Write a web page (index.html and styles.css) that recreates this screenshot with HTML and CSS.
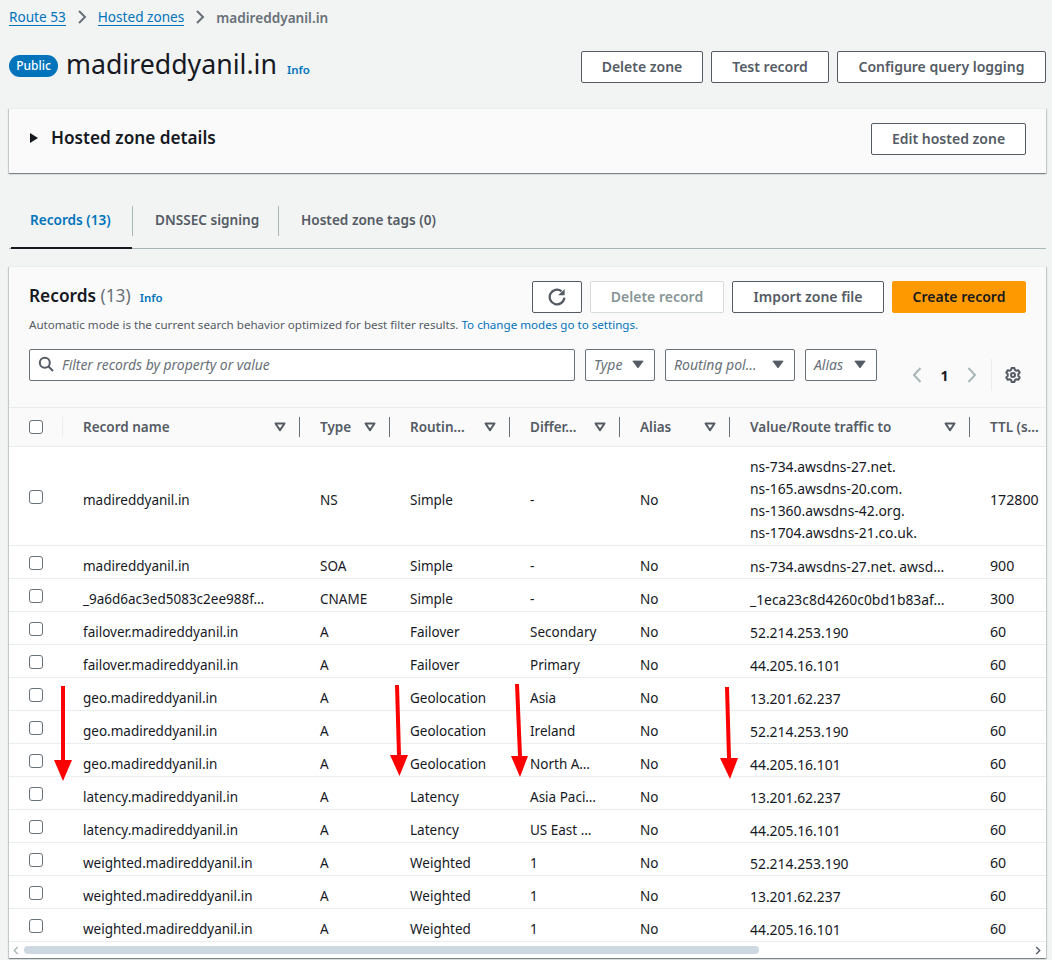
FILE: index.html
```html
<!DOCTYPE html>
<html lang="en">
<head>
  <meta charset="UTF-8">
  <title>madireddyanil.in - Route 53</title>
  <link rel="stylesheet" href="styles.css">
</head>
<body>
  <svg class="sprite" width="0" height="0">
    <symbol id="caret" viewBox="0 0 12 10">
      <path d="M1.5 1.5h9L6 8.2z" fill="none" stroke="#545b64" stroke-width="2" stroke-linejoin="round"/>
    </symbol>
    <symbol id="drop" viewBox="0 0 14 10">
      <path d="M1 1h12L7 9z" fill="#545b64" stroke="#545b64" stroke-linejoin="round"/>
    </symbol>
  </svg>

  <nav class="breadcrumb">
    <a href="#">Route 53</a>
    <svg class="crumb-sep" viewBox="0 0 10 14"><path d="M2 1l6 6-6 6" fill="none" stroke="#687078" stroke-width="2"/></svg>
    <a href="#">Hosted zones</a>
    <svg class="crumb-sep" viewBox="0 0 10 14"><path d="M2 1l6 6-6 6" fill="none" stroke="#687078" stroke-width="2"/></svg>
    <span class="crumb-current">madireddyanil.in</span>
  </nav>

  <header class="page-head">
    <span class="badge">Public</span>
    <h1>madireddyanil.in</h1>
    <a class="info info-head" href="#">Info</a>
    <div class="actions">
      <button class="btn btn-delete-zone">Delete zone</button>
      <button class="btn btn-test">Test record</button>
      <button class="btn btn-logging">Configure query logging</button>
    </div>
  </header>

  <section class="panel details">
    <svg class="expand" viewBox="0 0 8 10"><path d="M0 0l8 5-8 5z" fill="#16191f"/></svg>
    <h2>Hosted zone details</h2>
    <button class="btn btn-edit">Edit hosted zone</button>
  </section>

  <div class="tabs">
    <a class="tab tab-active" href="#">Records (13)</a>
    <a class="tab tab-dnssec" href="#">DNSSEC signing</a>
    <a class="tab tab-tags" href="#">Hosted zone tags (0)</a>
  </div>

  <section class="panel records">
    <div class="records-head">
      <div class="records-title">
        <h2>Records <span class="count">(13)</span></h2>
        <a class="info" href="#">Info</a>
      </div>
      <button class="btn btn-refresh" aria-label="Refresh">
        <svg viewBox="0 0 16 16" width="18" height="18"><path d="M14.500 8.500a6.500 6.500 0 1 1-2.500-5.600" fill="none" stroke="#545b64" stroke-width="2"/><path d="M14.800 0.800v5.700H9z" fill="#545b64"/></svg>
      </button>
      <button class="btn btn-disabled">Delete record</button>
      <button class="btn btn-import">Import zone file</button>
      <button class="btn btn-primary">Create record</button>
    </div>
    <p class="hint">Automatic mode is the current search behavior optimized for best filter results. <a href="#">To change modes go to settings.</a></p>

    <div class="filters">
      <div class="search">
        <svg viewBox="0 0 16 16" width="16" height="16"><circle cx="6.800" cy="6.800" r="5" fill="none" stroke="#545b64" stroke-width="2"/><path d="M10.500 10.500l4.500 4.500" stroke="#545b64" stroke-width="2"/></svg>
        <span>Filter records by property or value</span>
      </div>
      <div class="select select-type"><span>Type</span><svg class="drop"><use href="#drop"/></svg></div>
      <div class="select select-routing"><span>Routing pol…</span><svg class="drop"><use href="#drop"/></svg></div>
      <div class="select select-alias"><span>Alias</span><svg class="drop"><use href="#drop"/></svg></div>
      <div class="pager">
        <svg class="page-arrow" viewBox="0 0 10 16"><path d="M8.500 1L2 8l6.500 7" fill="none" stroke="#aab7b8" stroke-width="2"/></svg>
        <span class="page-num">1</span>
        <svg class="page-arrow" viewBox="0 0 10 16"><path d="M1.500 1L8 8l-6.500 7" fill="none" stroke="#aab7b8" stroke-width="2"/></svg>
        <span class="pager-rule"></span>
        <svg class="gear" viewBox="0 0 16 16" width="16" height="16">
          <path d="M6.600 1h2.800l.5 1.900 1.500.9 1.900-.6 1.400 2.400-1.400 1.400v2l1.400 1.400-1.400 2.400-1.900-.6-1.500.9-.5 1.900H6.600l-.5-1.900-1.500-.9-1.900.6-1.400-2.400L2.700 9V7L1.300 5.600l1.400-2.400 1.900.6 1.500-.9z" fill="none" stroke="#545b64" stroke-width="2" stroke-linejoin="round"/>
          <circle cx="8" cy="8" r="2" fill="none" stroke="#545b64" stroke-width="2"/>
        </svg>
      </div>
    </div>

    <div class="table-wrap">
      <table>
        <colgroup>
          <col class="col-check"><col class="col-name"><col class="col-type"><col class="col-routing"><col class="col-diff"><col class="col-alias"><col class="col-value"><col class="col-ttl">
        </colgroup>
        <thead>
          <tr>
            <th class="check-head"><span class="checkbox"></span></th>
            <th><div class="th-in"><span>Record name</span><svg class="caret"><use href="#caret"/></svg></div></th>
            <th><div class="th-in"><span>Type</span><svg class="caret"><use href="#caret"/></svg></div></th>
            <th><div class="th-in"><span>Routin…</span><svg class="caret"><use href="#caret"/></svg></div></th>
            <th><div class="th-in"><span>Differ…</span><svg class="caret"><use href="#caret"/></svg></div></th>
            <th><div class="th-in"><span>Alias</span><svg class="caret"><use href="#caret"/></svg></div></th>
            <th><div class="th-in"><span>Value/Route traffic to</span><svg class="caret"><use href="#caret"/></svg></div></th>
            <th class="ttl-head">TTL (s…</th>
          </tr>
        </thead>
        <tbody>
          <tr class="row-tall">
            <td><span class="checkbox"></span></td><td>madireddyanil.in</td><td>NS</td><td>Simple</td><td>-</td><td>No</td>
            <td class="multi">ns-734.awsdns-27.net.<br>ns-165.awsdns-20.com.<br>ns-1360.awsdns-42.org.<br>ns-1704.awsdns-21.co.uk.</td><td>172800</td>
          </tr>
          <tr><td><span class="checkbox"></span></td><td>madireddyanil.in</td><td>SOA</td><td>Simple</td><td>-</td><td>No</td><td>ns-734.awsdns-27.net. awsd…</td><td>900</td></tr>
          <tr><td><span class="checkbox"></span></td><td>_9a6d6ac3ed5083c2ee988f…</td><td>CNAME</td><td>Simple</td><td>-</td><td>No</td><td>_1eca23c8d4260c0bd1b83af…</td><td>300</td></tr>
          <tr><td><span class="checkbox"></span></td><td>failover.madireddyanil.in</td><td>A</td><td>Failover</td><td>Secondary</td><td>No</td><td>52.214.253.190</td><td>60</td></tr>
          <tr><td><span class="checkbox"></span></td><td>failover.madireddyanil.in</td><td>A</td><td>Failover</td><td>Primary</td><td>No</td><td>44.205.16.101</td><td>60</td></tr>
          <tr><td><span class="checkbox"></span></td><td>geo.madireddyanil.in</td><td>A</td><td>Geolocation</td><td>Asia</td><td>No</td><td>13.201.62.237</td><td>60</td></tr>
          <tr><td><span class="checkbox"></span></td><td>geo.madireddyanil.in</td><td>A</td><td>Geolocation</td><td>Ireland</td><td>No</td><td>52.214.253.190</td><td>60</td></tr>
          <tr><td><span class="checkbox"></span></td><td>geo.madireddyanil.in</td><td>A</td><td>Geolocation</td><td>North A…</td><td>No</td><td>44.205.16.101</td><td>60</td></tr>
          <tr><td><span class="checkbox"></span></td><td>latency.madireddyanil.in</td><td>A</td><td>Latency</td><td>Asia Paci…</td><td>No</td><td>13.201.62.237</td><td>60</td></tr>
          <tr><td><span class="checkbox"></span></td><td>latency.madireddyanil.in</td><td>A</td><td>Latency</td><td>US East …</td><td>No</td><td>44.205.16.101</td><td>60</td></tr>
          <tr><td><span class="checkbox"></span></td><td>weighted.madireddyanil.in</td><td>A</td><td>Weighted</td><td>1</td><td>No</td><td>52.214.253.190</td><td>60</td></tr>
          <tr><td><span class="checkbox"></span></td><td>weighted.madireddyanil.in</td><td>A</td><td>Weighted</td><td>1</td><td>No</td><td>13.201.62.237</td><td>60</td></tr>
          <tr><td><span class="checkbox"></span></td><td>weighted.madireddyanil.in</td><td>A</td><td>Weighted</td><td>1</td><td>No</td><td>44.205.16.101</td><td>60</td></tr>
        </tbody>
      </table>
    </div>

    <div class="hscroll">
      <svg viewBox="0 0 6 10" width="6" height="9"><path d="M5 1L1 5l4 4" fill="none" stroke="#aab7b8" stroke-width="1.500"/></svg>
      <div class="hscroll-track"><div class="hscroll-thumb"></div></div>
      <svg viewBox="0 0 6 10" width="6" height="9"><path d="M1 1l4 4-4 4" fill="none" stroke="#545b64" stroke-width="1.500"/></svg>
    </div>
  </section>

  <!-- red arrows drawn over the screenshot -->
  <svg class="arrows" viewBox="0 0 1052 960" width="1052" height="960">
    <g fill="#ff0000">
      <polygon points="61,686 65,686 65,760 72,760 63,781 54,760 61,760"/>
      <polygon points="395,685 399,685 401,755 408,755 399.500,776 390,755 397,755"/>
      <polygon points="515,684 519,684 522,756 528,756 520,777 511,756 518,756"/>
      <polygon points="725,687 729,687 731,758 738,758 730,779 720,758 727,758"/>
    </g>
  </svg>
</body>
</html>
```

FILE: styles.css
```css
* {
  box-sizing: border-box;
}
html, body {
  height: 960px;
  overflow: hidden;
}
body {
  position: relative;
  margin: 0;
  padding: 7px 6px 0 9px;
  background-color: #f2f3f3;
  color: #16191f;
  font-family: "Noto Sans", sans-serif;
  font-size: 13.5px;
}
a {
  color: #0073bb;
  text-decoration: none;
}
h1, h2, p {
  margin: 0;
}
.sprite {
  position: absolute;
}
.arrows {
  position: absolute;
  left: 0;
  top: 0;
  pointer-events: none;
}

/* breadcrumb */
.breadcrumb {
  display: flex;
  align-items: center;
  height: 20px;
  font-size: 13.6px;
}
.breadcrumb a {
  border-bottom: 1px solid #0073bb;
  line-height: 17px;
}
.crumb-sep {
  width: 10px;
  height: 14px;
  margin: 0 11px;
}
.crumb-current {
  color: #687078;
  font-weight: 600;
}

/* page header */
.page-head {
  display: flex;
  align-items: center;
  height: 32px;
  margin-top: 24px;
}
.badge {
  width: 49px;
  height: 22px;
  margin-top: -2px;
  border-radius: 11px;
  background-color: #0073bb;
  color: #fff;
  font-size: 12px;
  font-weight: 500;
  line-height: 22px;
  text-align: center;
}
h1 {
  margin: -6px 0 0 8px;
  font-size: 26.7px;
  font-weight: 400;
  line-height: 34px;
}
.info {
  font-size: 11.5px;
  font-weight: 600;
}
.info-head {
  margin: 5px 0 0 10px;
}
.actions {
  display: flex;
  gap: 8px;
  margin-left: auto;
}

/* buttons */
.btn {
  height: 32px;
  padding: 0 0 2px;
  border: 1px solid #545b64;
  border-radius: 2px;
  background-color: #fff;
  color: #545b64;
  font-family: inherit;
  font-size: 14px;
  font-weight: 600;
}
.btn-delete-zone {
  width: 122px;
}
.btn-test {
  width: 118px;
}
.btn-logging {
  width: 209px;
}
.btn-edit {
  width: 155px;
  margin-left: auto;
}
.btn-refresh {
  display: flex;
  align-items: center;
  justify-content: center;
  width: 50px;
  margin-left: auto;
  padding: 0;
}
.btn-disabled {
  width: 134px;
  border-color: #d5dbdb;
  color: #879596;
}
.btn-import {
  width: 152px;
}
.btn-primary {
  width: 134px;
  border-color: #ff9900;
  background-color: #ff9900;
  color: #16191f;
}

/* panels */
.panel {
  background-color: #fafafa;
  box-shadow: 0 1px 1px 0 rgba(0, 28, 36, .3), 1px 1px 1px 0 rgba(0, 28, 36, .15), -1px 1px 1px 0 rgba(0, 28, 36, .15);
  border-top: 1px solid #eaeded;
}
.details {
  display: flex;
  align-items: center;
  height: 65px;
  margin-top: 25px;
  padding: 0 20px 4px 21px;
}
.expand {
  width: 8px;
  height: 10px;
  margin-bottom: 3px;
}
.details h2 {
  margin: 0 0 3px 13px;
  font-size: 17.2px;
  font-weight: 600;
}

/* tabs */
.tabs {
  display: flex;
  height: 44px;
  margin-top: 32px;
  border-bottom: 1px solid #aab7b8;
  padding-left: 2px;
  font-size: 13.6px;
}
.tab {
  height: 30px;
  margin-top: 1px;
  padding-left: 22px;
  border-right: 1px solid #aab7b8;
  color: #545b64;
  font-weight: 600;
  line-height: 28px;
}
.tab-active {
  position: relative;
  width: 122px;
  padding-left: 19px;
  color: #0073bb;
}
.tab-active::after {
  content: "";
  position: absolute;
  left: 0;
  right: 0;
  top: 41px;
  height: 2px;
  background-color: #16191f;
}
.tab-dnssec {
  width: 146px;
}
.tab-tags {
  border-right: 0;
}

/* records panel */
.records {
  position: relative;
  height: 692px;
  margin-top: 17px;
  overflow: hidden;
}
.records-head {
  display: flex;
  align-items: center;
  gap: 8px;
  margin: 14px 20px 0;
  height: 32px;
}
.records-title {
  display: flex;
  align-items: center;
}
.records-title h2 {
  margin-bottom: 3px;
  font-size: 17.3px;
  font-weight: 600;
}
.count {
  color: #687078;
  font-weight: 400;
}
.records-title .info {
  margin-left: 9px;
}
.hint {
  margin: 3px 20px 0;
  color: #545b64;
  font-size: 11.6px;
  line-height: 18px;
}
.filters {
  display: flex;
  align-items: flex-start;
  gap: 10px;
  margin: 15px 20px 0;
  height: 32px;
}
.search, .select {
  display: flex;
  flex: none;
  align-items: center;
  height: 32px;
  padding-bottom: 2px;
  border: 1px solid #687078;
  border-radius: 2px;
  background-color: #fff;
  color: #687078;
  font-size: 14px;
  font-style: italic;
}
.search {
  gap: 8px;
  width: 546px;
  padding-left: 8px;
  font-size: 13.9px;
}
.select {
  justify-content: space-between;
  padding-left: 8px;
  padding-right: 10px;
}
.select-type {
  width: 70px;
}
.select-routing {
  width: 130px;
}
.select-alias {
  width: 72px;
}
.drop {
  width: 12px;
  height: 9px;
}
.pager {
  display: flex;
  flex: none;
  align-items: center;
  height: 32px;
  margin-top: 10px;
  margin-left: 25px;
}
.page-arrow {
  width: 10px;
  height: 16px;
}
.page-num {
  width: 45px;
  font-size: 14px;
  font-weight: 700;
  text-align: center;
}
.pager-rule {
  width: 1px;
  height: 32px;
  margin: 0 13px 0 14px;
  background-color: #eaeded;
}

/* table */
.table-wrap {
  margin-top: 26px;
  overflow: hidden;
}
table {
  width: 1055px;
  table-layout: fixed;
  border-collapse: collapse;
}
.col-check { width: 54px; }
.col-name { width: 237px; }
.col-type { width: 90px; }
.col-routing { width: 120px; }
.col-diff { width: 110px; }
.col-alias { width: 110px; }
.col-value { width: 240px; }
.col-ttl { width: 94px; }
thead tr {
  height: 39px;
  border-top: 1px solid #eaeded;
  border-bottom: 1px solid #eaeded;
}
th {
  position: relative;
  padding: 0 0 0 20px;
  color: #545b64;
  font-weight: 600;
  text-align: left;
  white-space: nowrap;
  overflow: hidden;
}
.th-in {
  display: flex;
  align-items: center;
  justify-content: space-between;
  height: 20px;
  padding-right: 13px;
  border-right: 1px solid #687078;
}
.th-in .caret {
  width: 12px;
  height: 10px;
}
.check-head::after {
  content: "";
  position: absolute;
  right: 0;
  top: 9px;
  height: 20px;
  width: 1px;
  background-color: #eaeded;
}
tbody tr {
  height: 33px;
  background-color: #fff;
  border-bottom: 1px solid #eaeded;
}
.row-tall {
  height: 99px;
}
td {
  padding: 8px 20px 0;
  white-space: nowrap;
}
td:nth-child(7) {
  font-size: 13.9px;
}
td:last-child {
  padding: 7px 0 0 20px;
  font-size: 14.2px;
}
.multi {
  line-height: 22px;
}
.checkbox {
  display: block;
  width: 14px;
  height: 14px;
  margin-bottom: 6px;
  border: 1px solid #687078;
  border-radius: 3px;
  background-color: #fff;
}
thead .checkbox {
  margin-bottom: 0;
}

/* fake horizontal scrollbar */
.hscroll {
  display: flex;
  align-items: center;
  gap: 5px;
  height: 16px;
  padding: 0 5px 0 4px;
  background-color: #fff;
}
.hscroll-track {
  flex: 1;
  height: 8px;
}
.hscroll-thumb {
  width: 735px;
  height: 8px;
  border-radius: 4px;
  background-color: #ced8e2;
}
```
